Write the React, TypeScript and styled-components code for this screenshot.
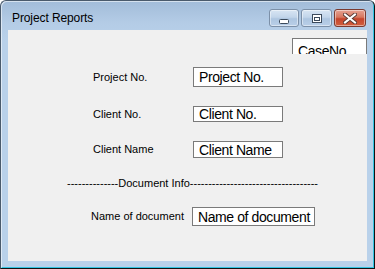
import React from "react";
import styled, { createGlobalStyle } from "styled-components";

const Global = createGlobalStyle`
  html, body { margin: 0; padding: 0; background: #ffffff; }
  #root { width: 375px; height: 269px; }
  * { box-sizing: border-box; }
`;

const Window = styled.div`
  width: 375px;
  height: 269px;
  display: flex;
  flex-direction: column;
  border: 1px solid #4a5a6c;
  border-right-color: #111;
  border-bottom-color: #111;
  border-radius: 6px 6px 0 0;
  background: linear-gradient(to bottom, #a2bcd9 0px, #b4cce6 22px, #b9d1ea 40px, #b9d1ea 100%);
  box-shadow: inset 1px 1px 0 rgba(255, 255, 255, 0.55), inset -1px -1px 0 #33c4e2;
  overflow: hidden;
`;

const TitleBar = styled.div`
  height: 29px;
  display: flex;
  align-items: flex-start;
  justify-content: space-between;
  padding: 0 8px 0 11px;
  flex-shrink: 0;
`;

const Title = styled.div`
  font-family: "Liberation Sans", Arial, sans-serif;
  font-size: 12px;
  color: #000;
  line-height: 14px;
  padding-top: 10px;
  letter-spacing: -0.1px;
`;

const Buttons = styled.div`
  display: flex;
  gap: 2px;
  padding-top: 8px;
`;

const CapButton = styled.div<{ $w: number; $kind: "normal" | "close" }>`
  width: ${(p) => p.$w}px;
  height: 18px;
  border-radius: 3px;
  border: 1px solid ${(p) => (p.$kind === "close" ? "#7a3a30" : "#7c90a8")};
  background: ${(p) =>
    p.$kind === "close"
      ? "linear-gradient(to bottom, #e6a293 0%, #d7775f 45%, #c5442c 55%, #d2603f 100%)"
      : "linear-gradient(to bottom, #d8e5f3 0%, #c2d5ea 45%, #adc5e0 55%, #b9cfe8 100%)"};
  box-shadow: inset 0 0 0 1px rgba(255, 255, 255, 0.45);
  display: flex;
  align-items: center;
  justify-content: center;
`;

const Client = styled.div`
  flex: 1;
  margin: 0 7px 7px 7px;
  background: #f0f0f0;
  display: flex;
  flex-direction: column;
  overflow: hidden;
`;

const TopRow = styled.div`
  display: flex;
  justify-content: flex-end;
  padding-top: 8px;
`;

const CaseBox = styled.div`
  width: 75px;
  height: 16px;
  background: #fff;
  border: 1px solid #7a7a7a;
  border-bottom: none;
  overflow: hidden;
  font-family: "Liberation Sans", Arial, sans-serif;
  font-size: 14px;
  letter-spacing: -0.4px;
  line-height: 16px;
  padding: 4px 0 0 5px;
  color: #000;
`;

const Row = styled.div<{ $top: number; $left: number; $labelW: number }>`
  display: grid;
  grid-template-columns: ${(p) => p.$labelW}px auto;
  align-items: center;
  justify-content: start;
  margin-top: ${(p) => p.$top}px;
  padding-left: ${(p) => p.$left}px;
`;

const Label = styled.div`
  font-family: "Liberation Sans", Arial, sans-serif;
  font-size: 11px;
  color: #000;
  line-height: 13px;
`;

const TextBox = styled.div<{ $w: number; $h: number }>`
  width: ${(p) => p.$w}px;
  height: ${(p) => p.$h}px;
  background: #fff;
  border: 1px solid #7a7a7a;
  overflow: hidden;
  display: flex;
  align-items: center;
  padding-left: 5px;
  font-family: "Liberation Sans", Arial, sans-serif;
  font-size: 14px;
  letter-spacing: -0.4px;
  line-height: 16px;
  color: #000;
  white-space: nowrap;
`;

const Divider = styled.div`
  margin-top: 19px;
  padding-left: 59px;
  font-family: "Liberation Sans", Arial, sans-serif;
  font-size: 11px;
  line-height: 13px;
  color: #000;
  white-space: nowrap;
`;

const MinIcon = () => (
  <svg width="12" height="16" viewBox="0 0 12 16" style={{ marginTop: 2 }}>
    <rect x="1.5" y="8.5" width="9" height="4" rx="1" fill="#fff" stroke="#3b4a5c" />
  </svg>
);

const MaxIcon = () => (
  <svg width="10" height="9" viewBox="0 0 10 9">
    <rect x="0.5" y="0.5" width="9" height="8" fill="#fff" stroke="#3b4a5c" />
    <rect x="2.5" y="3.5" width="5" height="3" fill="none" stroke="#3b4a5c" />
  </svg>
);

const CloseIcon = () => (
  <svg width="14" height="11" viewBox="0 0 14 11">
    <path d="M2 1.5 L12 9.5 M12 1.5 L2 9.5" stroke="#5a3b36" strokeWidth="4" strokeLinecap="square" />
    <path d="M2 1.5 L12 9.5 M12 1.5 L2 9.5" stroke="#ffffff" strokeWidth="2" strokeLinecap="square" />
  </svg>
);

export default function App() {
  return (
    <>
      <Global />
      <Window>
        <TitleBar>
          <Title>Project Reports</Title>
          <Buttons>
            <CapButton $w={30} $kind="normal">
              <MinIcon />
            </CapButton>
            <CapButton $w={31} $kind="normal">
              <MaxIcon />
            </CapButton>
            <CapButton $w={32} $kind="close">
              <CloseIcon />
            </CapButton>
          </Buttons>
        </TitleBar>
        <Client>
          <TopRow>
            <CaseBox>CaseNo</CaseBox>
          </TopRow>
          <Row $top={13} $left={85} $labelW={100}>
            <Label>Project No.</Label>
            <TextBox $w={90} $h={20}>Project No.</TextBox>
          </Row>
          <Row $top={19} $left={85} $labelW={100}>
            <Label>Client No.</Label>
            <TextBox $w={90} $h={16}>Client No.</TextBox>
          </Row>
          <Row $top={19} $left={85} $labelW={100}>
            <Label>Client Name</Label>
            <TextBox $w={90} $h={17}>Client Name</TextBox>
          </Row>
          <Divider>--------------Document Info-----------------------------------</Divider>
          <Row $top={17} $left={83} $labelW={101}>
            <Label>Name of document</Label>
            <TextBox $w={123} $h={19}>Name of document</TextBox>
          </Row>
        </Client>
      </Window>
    </>
  );
}
